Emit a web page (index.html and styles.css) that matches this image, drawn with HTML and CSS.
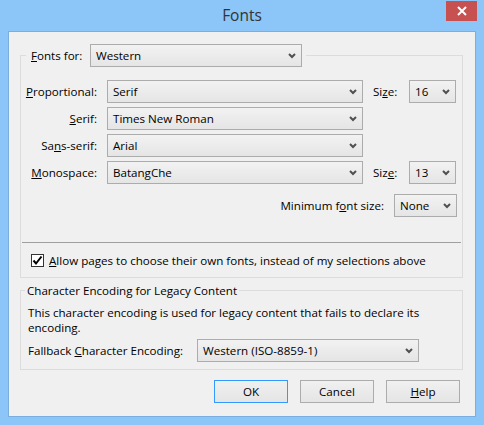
FILE: index.html
```html
<!DOCTYPE html>
<html>
<head>
<meta charset="utf-8">
<link rel="stylesheet" href="styles.css">
</head>
<body>
<div class="window">
  <div class="titlebar">
    <div class="title">Fonts</div>
    <div class="close">
      <svg width="10" height="10" viewBox="0 0 10 10"><path d="M1 1 L9 9 M9 1 L1 9" stroke="#fff" stroke-width="2" fill="none"/></svg>
    </div>
  </div>
  <div class="client">
    <fieldset class="group group-fonts">
      <legend class="legend-fonts">
        <span class="lbl-for"><u>F</u>onts for:</span>
        <div class="dd dd-for"><span>Western</span><svg class="chev" width="8" height="6" viewBox="0 0 8 6"><path d="M1 1 L4 4 L7 1" stroke="#505050" stroke-width="2" fill="none"/></svg></div>
      </legend>
      <div class="fontgrid">
        <span class="rl"><u>P</u>roportional:</span>
        <div class="dd"><span>Serif</span><svg class="chev" width="8" height="6" viewBox="0 0 8 6"><path d="M1 1 L4 4 L7 1" stroke="#505050" stroke-width="2" fill="none"/></svg></div>
        <span class="sl">Si<u>z</u>e:</span>
        <div class="dd"><span>16</span><svg class="chev" width="8" height="6" viewBox="0 0 8 6"><path d="M1 1 L4 4 L7 1" stroke="#505050" stroke-width="2" fill="none"/></svg></div>

        <span class="rl"><u>S</u>erif:</span>
        <div class="dd"><span>Times New Roman</span><svg class="chev" width="8" height="6" viewBox="0 0 8 6"><path d="M1 1 L4 4 L7 1" stroke="#505050" stroke-width="2" fill="none"/></svg></div>
        <span></span><span></span>

        <span class="rl">Sa<u>n</u>s-serif:</span>
        <div class="dd"><span>Arial</span><svg class="chev" width="8" height="6" viewBox="0 0 8 6"><path d="M1 1 L4 4 L7 1" stroke="#505050" stroke-width="2" fill="none"/></svg></div>
        <span></span><span></span>

        <span class="rl"><u>M</u>onospace:</span>
        <div class="dd"><span>BatangChe</span><svg class="chev" width="8" height="6" viewBox="0 0 8 6"><path d="M1 1 L4 4 L7 1" stroke="#505050" stroke-width="2" fill="none"/></svg></div>
        <span class="sl">Siz<u>e</u>:</span>
        <div class="dd"><span>13</span><svg class="chev" width="8" height="6" viewBox="0 0 8 6"><path d="M1 1 L4 4 L7 1" stroke="#505050" stroke-width="2" fill="none"/></svg></div>
      </div>
      <div class="minrow">
        <span class="minlbl">Minimum f<u>o</u>nt size:</span>
        <div class="dd dd-min"><span>None</span><svg class="chev" width="8" height="6" viewBox="0 0 8 6"><path d="M1 1 L4 4 L7 1" stroke="#505050" stroke-width="2" fill="none"/></svg></div>
      </div>
      <div class="sep"></div>
      <div class="checkrow">
        <span class="cb"><svg width="11" height="11" viewBox="0 0 11 11"><path d="M1.5 5.5 L4 8.5 L9.5 1.5" stroke="#000" stroke-width="2" fill="none"/></svg></span>
        <span><u>A</u>llow pages to choose their own fonts, instead of my selections above</span>
      </div>
    </fieldset>

    <fieldset class="group group-enc">
      <legend class="legend-enc">Character Encoding for Legacy Content</legend>
      <p class="desc">This character encoding is used for legacy content that fails to declare its encoding.</p>
      <div class="fallrow">
        <span class="falllbl">Fallback <u>C</u>haracter Encoding:</span>
        <div class="dd dd-fall"><span>Western (ISO-8859-1)</span><svg class="chev" width="8" height="6" viewBox="0 0 8 6"><path d="M1 1 L4 4 L7 1" stroke="#505050" stroke-width="2" fill="none"/></svg></div>
      </div>
    </fieldset>

    <div class="buttons">
      <div class="btn btn-default">OK</div>
      <div class="btn">Cancel</div>
      <div class="btn"><u>H</u>elp</div>
    </div>
  </div>
</div>
</body>
</html>
```
FILE: styles.css
```css
html, body {
  margin: 0;
  padding: 0;
}
body {
  width: 484px;
  height: 425px;
  overflow: hidden;
  font-family: "Open Sans", "Liberation Sans", sans-serif;
  font-size: 11.6px;
  color: #000;
}
.window {
  width: 484px;
  height: 425px;
  background: #8cc5f7;
  box-sizing: border-box;
  padding: 0 8px 8px 8px;
  display: flex;
  flex-direction: column;
}
.titlebar {
  height: 31px;
  margin: 0 -8px;
  display: grid;
  grid-template-columns: 1fr auto 1fr;
}
.title {
  grid-column: 2;
  font-size: 15.5px;
  line-height: 30px;
  color: #333;
}
.close {
  grid-column: 3;
  justify-self: end;
  align-self: start;
  margin-top: 1px;
  margin-right: 7px;
  width: 31px;
  height: 20px;
  background: #c75050;
  display: flex;
  align-items: center;
  justify-content: center;
}
.client {
  flex: 1;
  background: #f0f0f0;
  border: 1px solid #79aedf;
  display: flex;
  flex-direction: column;
}
.group {
  margin: 0 12px 0 11px;
  padding: 0;
  border: 1px solid #dcdcdc;
  min-width: 0;
}
.group-fonts {
  margin-top: 12px;
}
.legend-fonts {
  margin-left: 5px;
  padding: 0 4px 0 5px;
  display: flex;
  align-items: center;
  height: 23px;
}
.lbl-for {
  width: 59px;
}
.dd {
  box-sizing: border-box;
  height: 23px;
  border: 1px solid #acacac;
  background: linear-gradient(#f2f2f2, #e5e5e5);
  display: flex;
  align-items: center;
  justify-content: space-between;
  padding: 0 5px 0 5px;
  white-space: nowrap;
}
.chev {
  flex: none;
}
.dd-for {
  width: 212px;
}
.fontgrid {
  margin-top: 13px;
  display: grid;
  grid-template-columns: 76px 256px 26px 47px;
  grid-auto-rows: 23px;
  column-gap: 10px;
  row-gap: 4px;
  align-items: center;
}
.rl {
  text-align: right;
}
.sl {
  white-space: nowrap;
}
.minrow {
  margin-top: 10px;
  display: flex;
  justify-content: flex-end;
  align-items: center;
  padding-right: 5px;
}
.minlbl {
  margin-right: 10px;
}
.dd-min {
  width: 63px;
}
.sep {
  margin: 25px 1px 0 1px;
  border-top: 1px solid #a0a0a0;
}
.checkrow {
  display: flex;
  align-items: center;
  padding: 11px 0 10px 10px;
  height: 13px;
}
.cb {
  box-sizing: border-box;
  width: 13px;
  height: 13px;
  border: 1px solid #333;
  background: #fff;
  margin-right: 5px;
  display: flex;
  align-items: center;
  justify-content: center;
}
.group-enc {
  margin-top: 5px;
}
.legend-enc {
  margin-left: 4px;
  padding: 0 2px;
  line-height: 15px;
}
.desc {
  margin: 7px 0 0 0;
  padding: 0 7px;
  line-height: 15px;
}
.fallrow {
  margin-top: 4px;
  padding-left: 7px;
  padding-bottom: 7px;
  display: flex;
  align-items: center;
}
.falllbl {
  width: 169px;
}
.dd-fall {
  width: 222px;
}
.buttons {
  margin-top: 10px;
  padding-right: 15px;
  display: flex;
  justify-content: flex-end;
  gap: 12px;
}
.btn {
  box-sizing: border-box;
  width: 74px;
  height: 23px;
  border: 1px solid #acacac;
  background: linear-gradient(#f0f0f0, #e5e5e5);
  display: flex;
  align-items: center;
  justify-content: center;
}
.btn-default {
  border-color: #3399ff;
}
```
